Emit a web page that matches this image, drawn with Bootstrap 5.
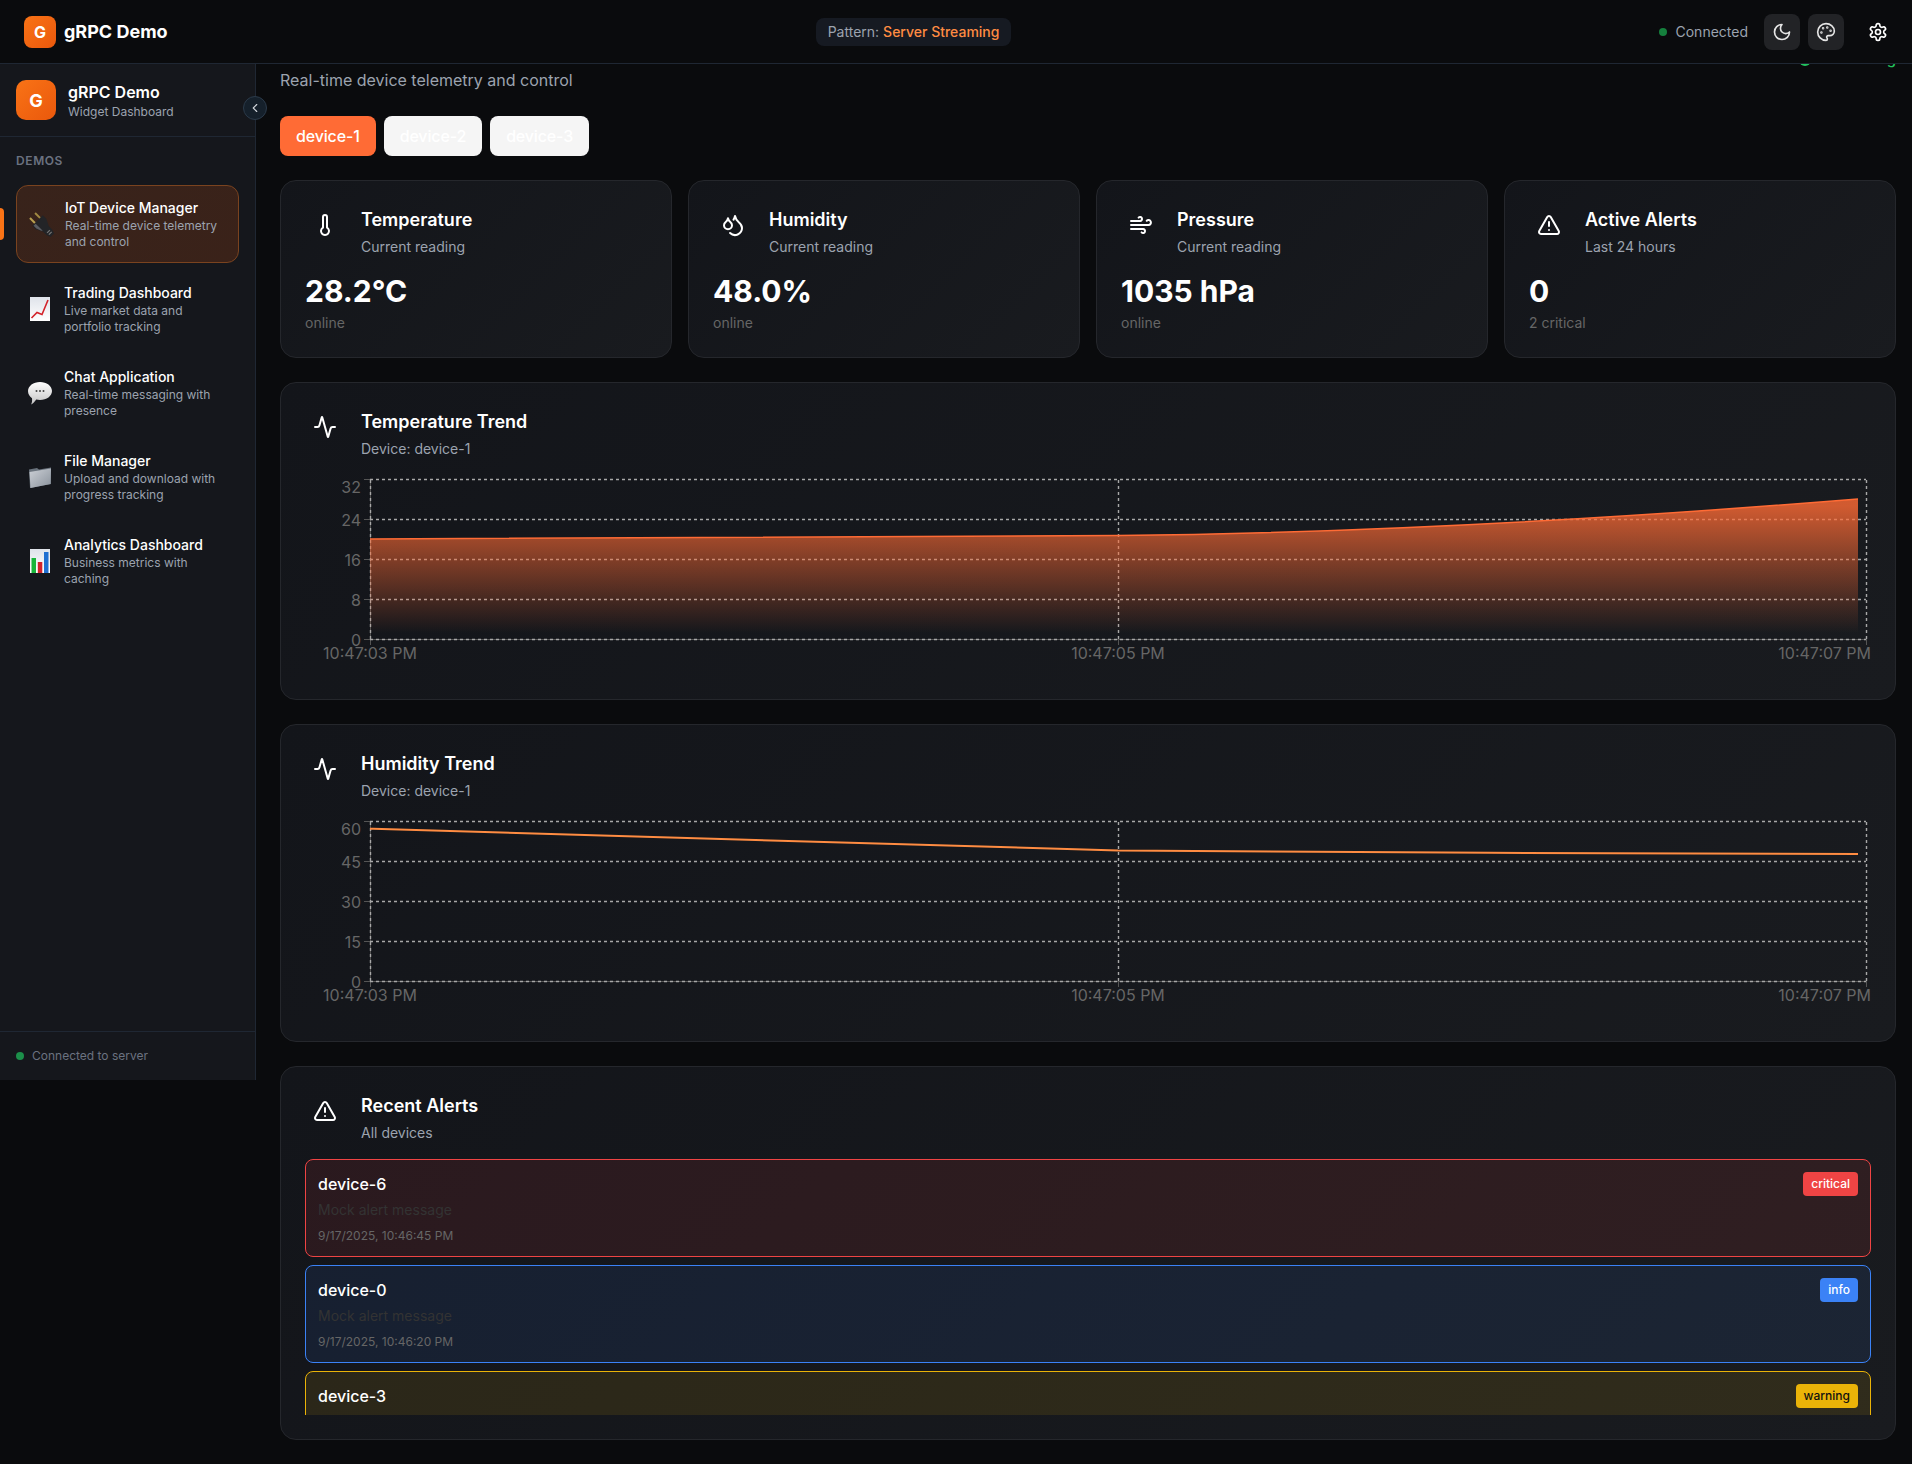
<!DOCTYPE html>
<html lang="en" data-bs-theme="dark">
<head>
  <meta charset="UTF-8">
  <title>gRPC Demo</title>
  <meta name="viewport" content="width=device-width, initial-scale=1">
  <link href="https://cdn.jsdelivr.net/npm/bootstrap@5.3.0/dist/css/bootstrap.min.css" rel="stylesheet">
  <style>
    body {
      font-family: "Inter", "Liberation Sans", sans-serif;
      background-color: #0a0b0d;
      color: #fff;
      width: 1912px;
      height: 1464px;
      overflow: hidden;
    }
    .ico { fill: none; stroke: currentColor; stroke-width: 2; stroke-linecap: round; stroke-linejoin: round; flex-shrink: 0; }

    /* top bar */
    .top-bar { height: 64px; padding: 0 16px 0 24px; background: #0a0b0d; border-bottom: 1px solid #1f2733; position: relative; z-index: 3; }
    .brand-mark { width: 32px; height: 32px; border-radius: 8px; background: linear-gradient(135deg, #f97316, #ea580c); font-weight: 700; font-size: 16px; }
    .brand-name { font-size: 18px; font-weight: 700; line-height: 28px; }
    .pattern-pill { height: 28px; padding: 0 12px; border-radius: 8px; background: #161a22; font-size: 14px; color: #9ca3af; }
    .pattern-pill b { color: #ff8c42; font-weight: 500; }
    .conn-dot { width: 8px; height: 8px; border-radius: 50%; background: #15803d; }
    .conn-text { font-size: 14px; color: #9ca3af; }
    .tool-btn { width: 36px; height: 36px; border-radius: 8px; background: #222326; color: #e5e5e5; }
    .tool-btn.plain { background: transparent; color: #fff; margin-left: 16px; }

    /* sidebar */
    .side-panel { width: 256px; height: 1016px; background: #15171c; border-right: 1px solid #1f2733; flex-shrink: 0; z-index: 2; }
    .side-head { height: 73px; padding: 16px; border-bottom: 1px solid #1f2733; gap: 12px; }
    .side-logo { width: 40px; height: 40px; border-radius: 10px; background: linear-gradient(135deg, #f97316, #ea580c); font-size: 18px; font-weight: 700; }
    .side-name { font-size: 16px; font-weight: 600; line-height: 24px; }
    .side-sub { font-size: 12px; line-height: 16px; color: #9ca3af; }
    .collapse-btn { position: absolute; top: 32px; right: -12px; width: 24px; height: 24px; border-radius: 50%; background: #15202b; border: 1px solid #2b3a4a; color: #d1d5db; }
    .side-label { padding: 16px 16px 16px; font-size: 12px; line-height: 16px; font-weight: 600; letter-spacing: .6px; color: #6b7280; }
    .demo-list { padding: 0 16px; gap: 8px; }
    .demo-item { padding: 12px; gap: 12px; border-radius: 12px; position: relative; }
    .demo-item.active { background: linear-gradient(135deg, #38231b, #3a2219); border: 1px solid #7a431f; }
    .demo-item.active::before { content: ""; position: absolute; left: -17px; top: 22px; width: 4px; height: 32px; background: #f97316; border-radius: 0 4px 4px 0; }
    .demo-title { font-size: 14px; line-height: 20px; font-weight: 500; }
    .demo-desc { font-size: 12px; line-height: 16px; color: #9ca3af; }
    .emoji-plug { overflow: visible; }
    .side-foot { height: 49px; padding: 0 16px; border-top: 1px solid #1f2733; gap: 8px; font-size: 12px; color: #6b7280; }
    .side-foot i { width: 8px; height: 8px; border-radius: 50%; background: #1c8f4a; }

    /* main */
    .main-area { flex: 1; min-width: 0; height: 1400px; padding: 4px 16px 0 24px; overflow: hidden; }
    .page-sub { font-size: 16px; line-height: 24px; color: #9ca3af; margin: 0 0 24px; }
    .live-tag { margin-top: -19px; gap: 12px; font-size: 15px; line-height: 20px; font-weight: 500; color: #22c55e; }
    .live-tag i { width: 12px; height: 12px; margin-top: 2px; border-radius: 50%; background: #22c55e; }
    .device-btn { height: 40px; padding: 0 16px; border: 0; border-radius: 8px; font-size: 16px; font-weight: 500; letter-spacing: -.15px; background: #f5f5f5; color: #fff; }
    .device-btn:hover { background: #f5f5f5; color: #fff; }
    .device-btn.on, .device-btn.on:hover { background: #ff6b35; }
    .device-row { gap: 8px; margin-bottom: 24px; }
    .stat-grid { display: grid; grid-template-columns: repeat(4, 1fr); gap: 16px; margin-bottom: 24px; }
    .panel-card { --bs-card-bg: transparent; background: linear-gradient(135deg, #13151a, #191b1f); border: 1px solid #25272c; border-radius: 16px; padding: 24px; color: #fff; }
    .chart-card { margin-bottom: 24px; }
    .panel-head { gap: 16px; margin-bottom: 16px; }
    .panel-ico { width: 40px; height: 40px; flex-shrink: 0; }
    .panel-title { font-size: 18px; line-height: 30px; font-weight: 600; }
    .panel-sub { font-size: 14px; line-height: 20px; color: #9ca3af; margin-top: 2px; }
    .stat-value { font-size: 30px; line-height: 36px; font-weight: 700; }
    .stat-note { font-size: 14px; line-height: 20px; color: #666; margin-top: 4px; }

    /* charts */
    .trend-plot { display: block; width: 1566px; height: 200px; }
    .trend-plot text { font-size: 16px; fill: #666; }
    .trend-grid { stroke: #a8a8a8; stroke-dasharray: 3 3; stroke-width: 1.4; fill: none; }
    .trend-axis { stroke: #555; stroke-width: 1; fill: none; }

    /* alerts */
    .alert-list { height: 256px; overflow: hidden; gap: 8px; }
    .alert-row { flex-shrink: 0; height: 98px; padding: 12px; border: 1px solid; border-radius: 8px; }
    .alert-row.crit { border-color: #ef4444; background: rgba(239, 68, 68, .11); }
    .alert-row.inf { border-color: #3b82f6; background: rgba(59, 130, 246, .1); }
    .alert-row.warn { border-color: #eab308; background: rgba(234, 179, 8, .11); }
    .alert-device { font-size: 16px; line-height: 24px; font-weight: 500; }
    .alert-msg { font-size: 14px; line-height: 20px; color: #333; margin-top: 4px; }
    .alert-time { font-size: 12px; line-height: 16px; color: #666; margin-top: 8px; }
    .alert-tag { height: 24px; padding: 0 8px; border-radius: 4px; font-size: 12px; line-height: 24px; font-weight: 500; }
    .crit .alert-tag { background: #ef4444; color: #fff; }
    .inf .alert-tag { background: #3b82f6; color: #fff; }
    .warn .alert-tag { background: #eab308; color: #111; }
  </style>
</head>
<body>

<!-- Top bar -->
<header class="top-bar d-flex align-items-center justify-content-between">
  <div class="d-flex align-items-center gap-2">
    <div class="brand-mark d-flex align-items-center justify-content-center">G</div>
    <div class="brand-name">gRPC Demo</div>
  </div>
  <div class="pattern-pill d-flex align-items-center gap-1">Pattern: <b>Server Streaming</b></div>
  <div class="d-flex align-items-center">
    <span class="conn-dot me-2"></span>
    <span class="conn-text me-3">Connected</span>
    <div class="tool-btn d-flex align-items-center justify-content-center me-2">
      <svg class="ico" width="20" height="20" viewBox="0 0 24 24"><path d="M12 3a6 6 0 0 0 9 9 9 9 0 1 1-9-9Z"/></svg>
    </div>
    <div class="tool-btn d-flex align-items-center justify-content-center">
      <svg class="ico" width="20" height="20" viewBox="0 0 24 24"><circle cx="13.5" cy="6.5" r=".5" fill="currentColor"/><circle cx="17.5" cy="10.5" r=".5" fill="currentColor"/><circle cx="8.5" cy="7.5" r=".5" fill="currentColor"/><circle cx="6.5" cy="12.5" r=".5" fill="currentColor"/><path d="M12 2C6.5 2 2 6.5 2 12s4.500 10 10 10c.926 0 1.648-.746 1.648-1.688 0-.437-.18-.835-.437-1.125-.29-.289-.438-.652-.438-1.125a1.640 1.640 0 0 1 1.668-1.668h1.996c3.051 0 5.555-2.503 5.555-5.554C21.965 6.012 17.461 2 12 2z"/></svg>
    </div>
    <div class="tool-btn plain d-flex align-items-center justify-content-center">
      <svg class="ico" width="20" height="20" viewBox="0 0 24 24"><path d="M12.22 2h-.44a2 2 0 0 0-2 2v.18a2 2 0 0 1-1 1.73l-.43.25a2 2 0 0 1-2 0l-.15-.08a2 2 0 0 0-2.73.73l-.22.38a2 2 0 0 0 .73 2.73l.15.1a2 2 0 0 1 1 1.72v.51a2 2 0 0 1-1 1.74l-.15.09a2 2 0 0 0-.73 2.73l.22.38a2 2 0 0 0 2.73.73l.15-.08a2 2 0 0 1 2 0l.43.25a2 2 0 0 1 1 1.73V20a2 2 0 0 0 2 2h.44a2 2 0 0 0 2-2v-.18a2 2 0 0 1 1-1.73l.43-.25a2 2 0 0 1 2 0l.15.08a2 2 0 0 0 2.73-.73l.22-.39a2 2 0 0 0-.73-2.73l-.15-.08a2 2 0 0 1-1-1.74v-.5a2 2 0 0 1 1-1.74l.15-.09a2 2 0 0 0 .73-2.73l-.22-.38a2 2 0 0 0-2.73-.73l-.15.08a2 2 0 0 1-2 0l-.43-.25a2 2 0 0 1-1-1.73V4a2 2 0 0 0-2-2z"/><circle cx="12" cy="12" r="3"/></svg>
    </div>
  </div>
</header>

<div class="d-flex align-items-start">
  <!-- Sidebar -->
  <aside class="side-panel position-relative d-flex flex-column">
    <div class="side-head d-flex align-items-center">
      <div class="side-logo d-flex align-items-center justify-content-center">G</div>
      <div class="lh-1">
        <div class="side-name">gRPC Demo</div>
        <div class="side-sub">Widget Dashboard</div>
      </div>
    </div>
    <div class="collapse-btn d-flex align-items-center justify-content-center">
      <svg class="ico" width="14" height="14" viewBox="0 0 24 24"><path d="m15 18-6-6 6-6"/></svg>
    </div>
    <div class="side-label">DEMOS</div>
    <div class="demo-list d-flex flex-column flex-grow-1">
      <div class="demo-item active d-flex align-items-center">
        <svg class="emoji-plug flex-shrink-0" width="24" height="24" viewBox="0 0 24 24">
          <g transform="rotate(-45 12 12)">
            <rect x="7.400" y="0" width="2" height="8" fill="#b8a050"/>
            <rect x="14.600" y="0" width="2" height="8" fill="#a08a42"/>
            <path d="M4.500 7h15v5l-3.500 7v5l-1.500 4h-5L8 24v-5l-3.500-7z" fill="#232427"/>
            <path d="M5.500 8h3v10l-1-1-2-5z" fill="#5a5c62"/>
            <rect x="10" y="22" width="4" height="1.200" fill="#777"/>
            <rect x="10" y="24.500" width="4" height="1.200" fill="#777"/>
          </g>
        </svg>
        <div>
          <div class="demo-title">IoT Device Manager</div>
          <div class="demo-desc">Real-time device telemetry and control</div>
        </div>
      </div>
      <div class="demo-item d-flex align-items-center">
        <svg width="24" height="24" viewBox="0 0 24 24" class="flex-shrink-0">
          <defs><linearGradient id="sheetFill" x1="0" y1="0" x2="0" y2="1"><stop offset="0" stop-color="#dfe3ea"/><stop offset="1" stop-color="#fff"/></linearGradient></defs>
          <rect x="2" y="0" width="20" height="24" fill="url(#sheetFill)"/>
          <path d="M3.500 21 9 15.500l5 2L20 3" fill="none" stroke="#d3222a" stroke-width="1.600"/>
        </svg>
        <div>
          <div class="demo-title">Trading Dashboard</div>
          <div class="demo-desc">Live market data and portfolio tracking</div>
        </div>
      </div>
      <div class="demo-item d-flex align-items-center">
        <svg width="24" height="24" viewBox="0 0 24 24" class="flex-shrink-0">
          <defs><linearGradient id="bubbleFill" x1="0" y1="0" x2="0" y2="1"><stop offset="0" stop-color="#fff"/><stop offset="1" stop-color="#c4c4c4"/></linearGradient></defs>
          <path d="M12 1c6.600 0 12 3.900 12 9s-5.400 9-12 9c-1.300 0-2.600-.2-3.800-.5C6.800 20.500 5 23 3 23.500c1-1.500 1.300-4 1-6.300C1.500 15.500 0 13 0 10c0-5.100 5.400-9 12-9z" fill="url(#bubbleFill)"/>
          <circle cx="8.500" cy="10" r="1" fill="#444"/><circle cx="12" cy="10" r="1" fill="#444"/><circle cx="15.500" cy="10" r="1" fill="#444"/>
        </svg>
        <div>
          <div class="demo-title">Chat Application</div>
          <div class="demo-desc">Real-time messaging with presence</div>
        </div>
      </div>
      <div class="demo-item d-flex align-items-center">
        <svg width="24" height="24" viewBox="0 0 24 24" class="flex-shrink-0">
          <defs><linearGradient id="folderFill" x1="0" y1="0" x2="1" y2="1"><stop offset="0" stop-color="#ccd0d6"/><stop offset="1" stop-color="#8a929c"/></linearGradient></defs>
          <path d="M1 4.500 9 3l2 1.500 12-2V19L2 23z" fill="#69727c"/>
          <path d="M1.500 7 23 3.500 22.500 19 2.500 23z" fill="url(#folderFill)"/>
        </svg>
        <div>
          <div class="demo-title">File Manager</div>
          <div class="demo-desc">Upload and download with progress tracking</div>
        </div>
      </div>
      <div class="demo-item d-flex align-items-center">
        <svg width="24" height="24" viewBox="0 0 24 24" class="flex-shrink-0">
          <rect x="2" y="0" width="20" height="24" fill="url(#sheetFill)"/>
          <rect x="3.500" y="9" width="4.500" height="15" fill="#19b53a"/>
          <rect x="9.800" y="13" width="4.500" height="11" fill="#d3222a"/>
          <rect x="16" y="3" width="4.500" height="21" fill="#1f6fd1"/>
        </svg>
        <div>
          <div class="demo-title">Analytics Dashboard</div>
          <div class="demo-desc">Business metrics with caching</div>
        </div>
      </div>
    </div>
    <div class="side-foot d-flex align-items-center"><i></i>Connected to server</div>
  </aside>

  <!-- Main -->
  <main class="main-area">
    <div class="d-flex justify-content-between">
      <p class="page-sub">Real-time device telemetry and control</p>
      <div class="live-tag d-flex align-items-center align-self-start"><i></i>Streaming</div>
    </div>
    <div class="device-row d-flex">
      <button class="btn device-btn on" type="button">device-1</button>
      <button class="btn device-btn" type="button">device-2</button>
      <button class="btn device-btn" type="button">device-3</button>
    </div>

    <div class="stat-grid">
      <div class="card panel-card">
        <div class="panel-head d-flex">
          <div class="panel-ico d-flex align-items-center justify-content-center"><svg class="ico" width="24" height="24" viewBox="0 0 24 24"><path d="M14 4v10.540a4 4 0 1 1-4 0V4a2 2 0 0 1 4 0Z"/></svg></div>
          <div><div class="panel-title">Temperature</div><div class="panel-sub">Current reading</div></div>
        </div>
        <div class="stat-value">28.2°C</div>
        <div class="stat-note">online</div>
      </div>
      <div class="card panel-card">
        <div class="panel-head d-flex">
          <div class="panel-ico d-flex align-items-center justify-content-center"><svg class="ico" width="24" height="24" viewBox="0 0 24 24"><path d="M7 16.300c2.200 0 4-1.830 4-4.050 0-1.160-.57-2.260-1.710-3.190S7.290 6.750 7 5.300c-.29 1.450-1.140 2.840-2.290 3.760S3 11.100 3 12.250c0 2.220 1.800 4.050 4 4.050z"/><path d="M12.560 6.600A10.970 10.970 0 0 0 14 3.020c.5 2.500 2 4.900 4 6.500s3 3.500 3 5.500a6.980 6.980 0 0 1-11.910 4.970"/></svg></div>
          <div><div class="panel-title">Humidity</div><div class="panel-sub">Current reading</div></div>
        </div>
        <div class="stat-value">48.0%</div>
        <div class="stat-note">online</div>
      </div>
      <div class="card panel-card">
        <div class="panel-head d-flex">
          <div class="panel-ico d-flex align-items-center justify-content-center"><svg class="ico" width="24" height="24" viewBox="0 0 24 24"><path d="M17.700 7.700a2.500 2.500 0 1 1 1.800 4.300H2"/><path d="M9.600 4.600A2 2 0 1 1 11 8H2"/><path d="M12.600 19.400A2 2 0 1 0 14 16H2"/></svg></div>
          <div><div class="panel-title">Pressure</div><div class="panel-sub">Current reading</div></div>
        </div>
        <div class="stat-value">1035 hPa</div>
        <div class="stat-note">online</div>
      </div>
      <div class="card panel-card">
        <div class="panel-head d-flex">
          <div class="panel-ico d-flex align-items-center justify-content-center"><svg class="ico" width="24" height="24" viewBox="0 0 24 24"><path d="m21.730 18-8-14a2 2 0 0 0-3.480 0l-8 14A2 2 0 0 0 4 21h16a2 2 0 0 0 1.730-3"/><path d="M12 9v4"/><path d="M12 17h.01"/></svg></div>
          <div><div class="panel-title">Active Alerts</div><div class="panel-sub">Last 24 hours</div></div>
        </div>
        <div class="stat-value">0</div>
        <div class="stat-note">2 critical</div>
      </div>
    </div>

    <div class="card panel-card chart-card">
      <div class="panel-head d-flex">
        <div class="panel-ico d-flex align-items-center justify-content-center"><svg class="ico" width="24" height="24" viewBox="0 0 24 24"><path d="M22 12h-2.480a2 2 0 0 0-1.930 1.460l-2.350 8.360a.25.25 0 0 1-.48 0L9.240 2.180a.25.25 0 0 0-.48 0l-2.350 8.360A2 2 0 0 1 4.490 12H2"/></svg></div>
        <div><div class="panel-title">Temperature Trend</div><div class="panel-sub">Device: device-1</div></div>
      </div>
      <svg class="trend-plot" viewBox="0 0 1566 200">
        <defs><linearGradient id="tempFill" x1="0" y1="0" x2="0" y2="1"><stop offset="5%" stop-color="#ff6b35" stop-opacity=".8"/><stop offset="95%" stop-color="#ff6b35" stop-opacity="0"/></linearGradient></defs>
        <path class="trend-axis" d="M59 4.500h6M59 44.500h6M59 84.500h6M59 124.500h6M59 164.500h6M65.500 4.500V170M813.500 164.500V170M1561.500 164.500V170M65 164.500h1497"/>
        <path class="trend-grid" d="M65 4.500H1561M65 44.500H1561M65 84.500H1561M65 124.500H1561M65 164.500H1561M65.500 5V165M813.500 5V165M1561.500 5V165"/>
        <path d="M65,64 C315,63 565,62 813,60.500 C1060,58 1306,44 1553,24 V165 H65 Z" fill="url(#tempFill)"/>
        <path d="M65,64 C315,63 565,62 813,60.500 C1060,58 1306,44 1553,24" fill="none" stroke="#ff6b35" stroke-width="1.500"/>
        <text x="56" y="18" text-anchor="end">32</text>
        <text x="56" y="51" text-anchor="end">24</text>
        <text x="56" y="91" text-anchor="end">16</text>
        <text x="56" y="131" text-anchor="end">8</text>
        <text x="56" y="171" text-anchor="end">0</text>
        <text x="65" y="184" text-anchor="middle">10:47:03 PM</text>
        <text x="813" y="184" text-anchor="middle">10:47:05 PM</text>
        <text x="1566" y="184" text-anchor="end">10:47:07 PM</text>
      </svg>
    </div>

    <div class="card panel-card chart-card">
      <div class="panel-head d-flex">
        <div class="panel-ico d-flex align-items-center justify-content-center"><svg class="ico" width="24" height="24" viewBox="0 0 24 24"><path d="M22 12h-2.480a2 2 0 0 0-1.930 1.460l-2.350 8.360a.25.25 0 0 1-.48 0L9.240 2.180a.25.25 0 0 0-.48 0l-2.350 8.360A2 2 0 0 1 4.490 12H2"/></svg></div>
        <div><div class="panel-title">Humidity Trend</div><div class="panel-sub">Device: device-1</div></div>
      </div>
      <svg class="trend-plot" viewBox="0 0 1566 200">
        <path class="trend-axis" d="M59 4.500h6M59 44.500h6M59 84.500h6M59 124.500h6M59 164.500h6M65.500 4.500V170M813.500 164.500V170M1561.500 164.500V170M65 164.500h1497"/>
        <path class="trend-grid" d="M65 4.500H1561M65 44.500H1561M65 84.500H1561M65 124.500H1561M65 164.500H1561M65.500 5V165M813.500 5V165M1561.500 5V165"/>
        <path d="M65,11.700 C315,19.200 565,27 813,33.500 C1060,35.500 1306,36.500 1553,37" fill="none" stroke="#ff8c42" stroke-width="2"/>
        <text x="56" y="18" text-anchor="end">60</text>
        <text x="56" y="51" text-anchor="end">45</text>
        <text x="56" y="91" text-anchor="end">30</text>
        <text x="56" y="131" text-anchor="end">15</text>
        <text x="56" y="171" text-anchor="end">0</text>
        <text x="65" y="184" text-anchor="middle">10:47:03 PM</text>
        <text x="813" y="184" text-anchor="middle">10:47:05 PM</text>
        <text x="1566" y="184" text-anchor="end">10:47:07 PM</text>
      </svg>
    </div>

    <div class="card panel-card">
      <div class="panel-head d-flex">
        <div class="panel-ico d-flex align-items-center justify-content-center"><svg class="ico" width="24" height="24" viewBox="0 0 24 24"><path d="m21.730 18-8-14a2 2 0 0 0-3.480 0l-8 14A2 2 0 0 0 4 21h16a2 2 0 0 0 1.730-3"/><path d="M12 9v4"/><path d="M12 17h.01"/></svg></div>
        <div><div class="panel-title">Recent Alerts</div><div class="panel-sub">All devices</div></div>
      </div>
      <div class="alert-list d-flex flex-column">
        <div class="alert-row crit d-flex justify-content-between align-items-start">
          <div><div class="alert-device">device-6</div><div class="alert-msg">Mock alert message</div><div class="alert-time">9/17/2025, 10:46:45 PM</div></div>
          <span class="alert-tag">critical</span>
        </div>
        <div class="alert-row inf d-flex justify-content-between align-items-start">
          <div><div class="alert-device">device-0</div><div class="alert-msg">Mock alert message</div><div class="alert-time">9/17/2025, 10:46:20 PM</div></div>
          <span class="alert-tag">info</span>
        </div>
        <div class="alert-row warn d-flex justify-content-between align-items-start">
          <div><div class="alert-device">device-3</div></div>
          <span class="alert-tag">warning</span>
        </div>
      </div>
    </div>
  </main>
</div>

<script src="https://cdn.jsdelivr.net/npm/bootstrap@5.3.0/dist/js/bootstrap.bundle.min.js"></script>
</body>
</html>
